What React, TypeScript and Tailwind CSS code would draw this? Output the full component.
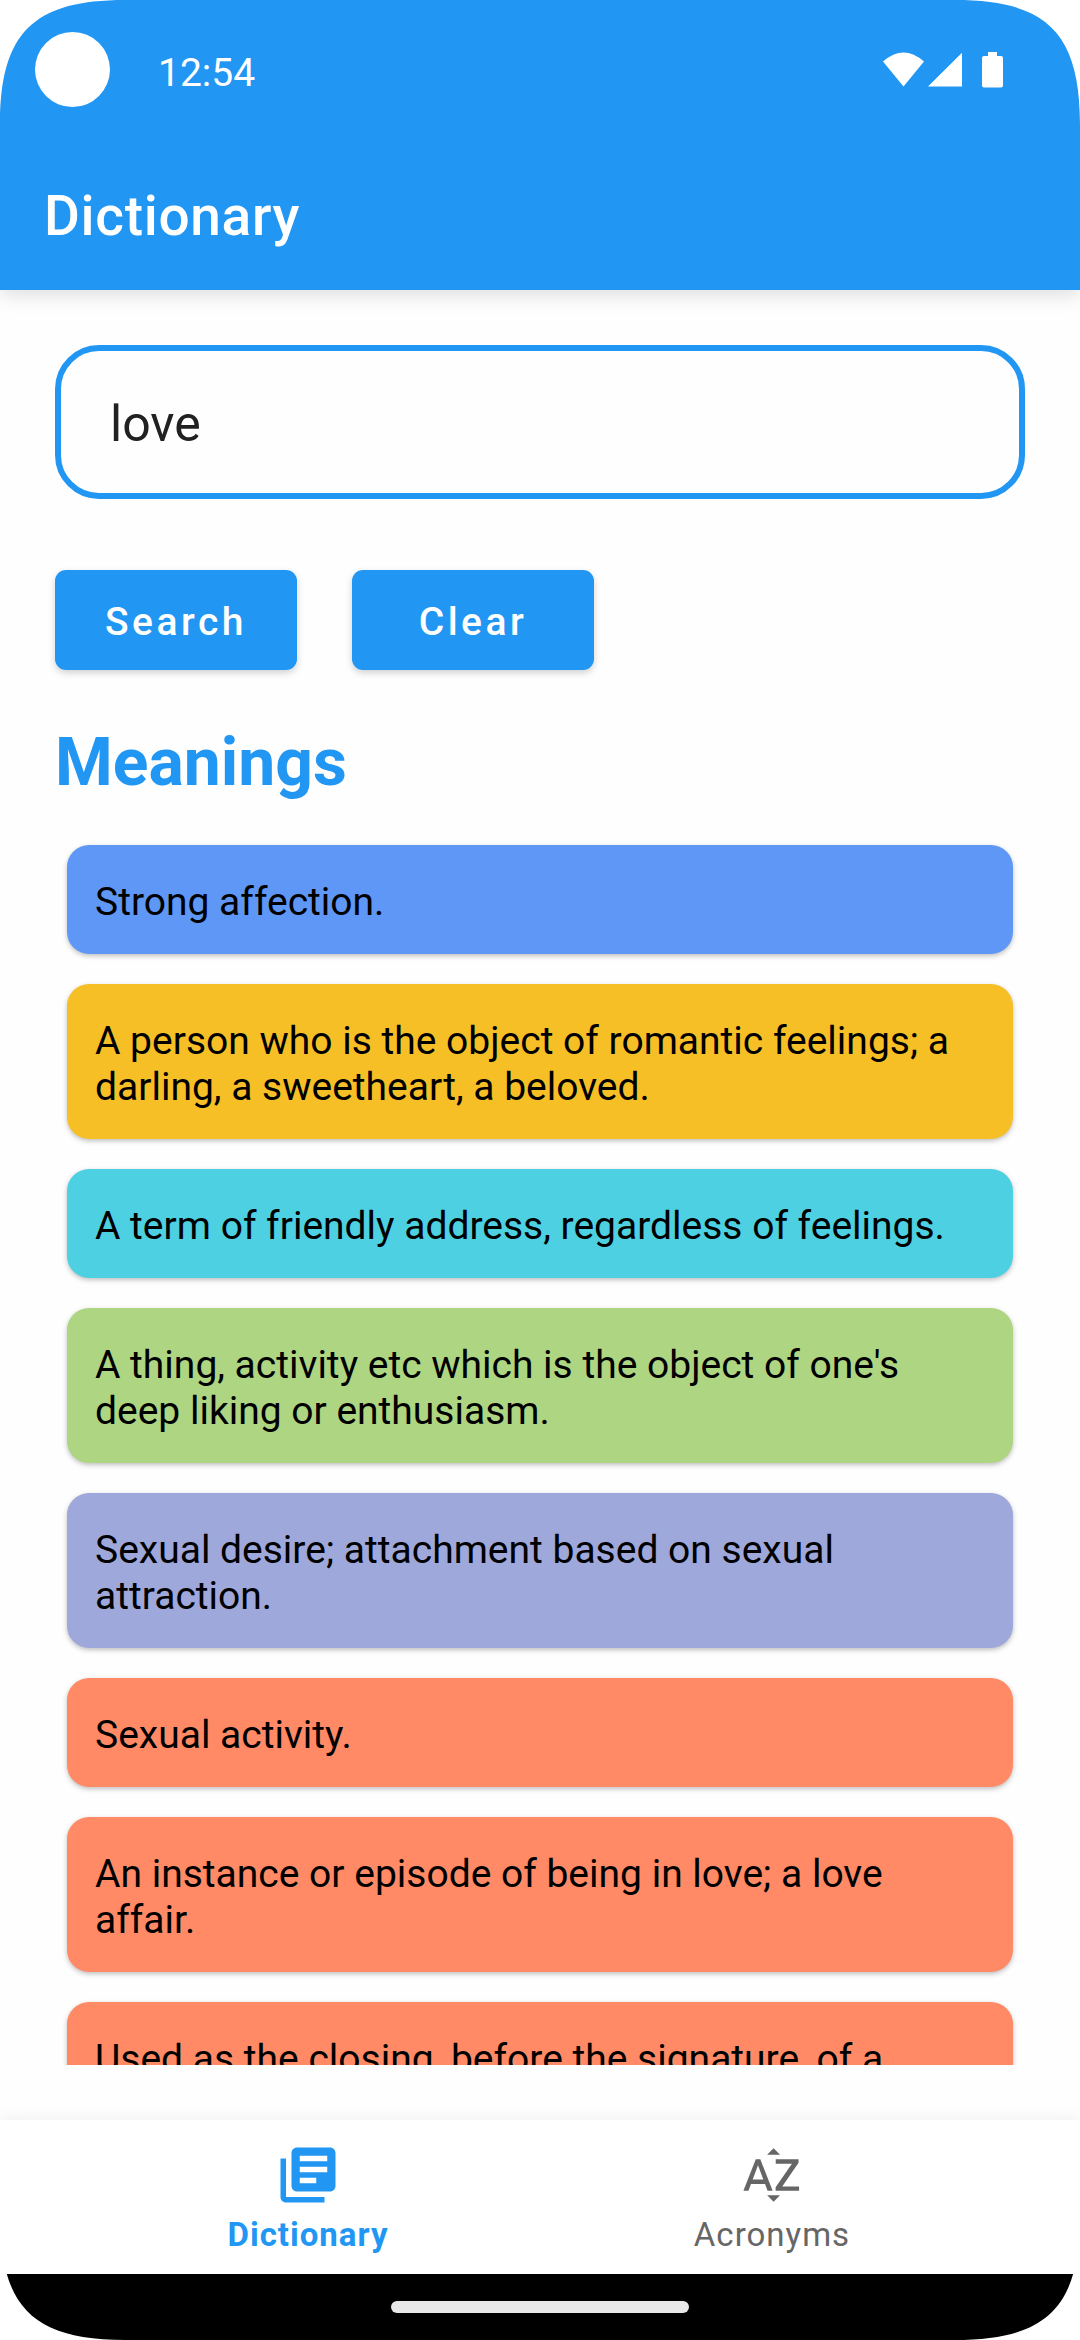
import { useState } from "react";
import { MdLibraryBooks, MdSortByAlpha } from "react-icons/md";

const meanings = [
  { text: "Strong affection.", color: "bg-[#5e97f6]" },
  {
    text: "A person who is the object of romantic feelings; a darling, a sweetheart, a beloved.",
    color: "bg-[#f6bf26]",
  },
  { text: "A term of friendly address, regardless of feelings.", color: "bg-[#4dd0e1]" },
  {
    text: "A thing, activity etc which is the object of one's deep liking or enthusiasm.",
    color: "bg-[#aed581]",
  },
  { text: "Sexual desire; attachment based on sexual attraction.", color: "bg-[#9fa8da]" },
  { text: "Sexual activity.", color: "bg-[#ff8a65]" },
  { text: "An instance or episode of being in love; a love affair.", color: "bg-[#ff8a65]" },
  { text: "Used as the closing, before the signature, of a letter.", color: "bg-[#ff8a65]" },
];

// Rounded display corner, drawn for the top left and turned for the others.
function Corner({ className }: { className: string }) {
  return (
    <svg
      aria-hidden="true"
      viewBox="0 0 125 125"
      className={`pointer-events-none absolute z-20 size-[125px] ${className}`}
    >
      <path d="M0 0H125C33 0 0 33 0 125Z" fill="#fff" />
    </svg>
  );
}

function StatusBar() {
  return (
    <div className="flex h-[136px] items-start px-[35px] pt-8">
      <div className="flex h-[75px] w-full items-center">
        <div className="size-[75px] rounded-full bg-white" />
        <span className="ml-12 pt-2 text-[39px] leading-[45px]">12:54</span>
        <svg
          aria-hidden="true"
          viewBox="0 0 120 36"
          className="mr-[42px] ml-auto h-9 w-[120px]"
          fill="#fff"
        >
          <path d="M0 9.500Q20.500 -8.500 41 9.500L20.500 34.500Z" />
          <path d="M79 .8V34.500H45Z" />
          <path d="M105 0h9v4h4a2 2 0 0 1 2 2v27.500a2 2 0 0 1-2 2h-17a2 2 0 0 1-2-2V6a2 2 0 0 1 2-2h4Z" />
        </svg>
      </div>
    </div>
  );
}

function ActionButton({ label, onClick }: { label: string; onClick?: () => void }) {
  return (
    <button
      type="button"
      onClick={onClick}
      className="h-[100px] w-[242px] rounded-[11px] bg-[#2196f3] pt-1 text-[39px] leading-[46px] font-medium tracking-[0.09em] text-white shadow-[0_3px_7px_rgba(0,0,0,0.18)]"
    >
      {label}
    </button>
  );
}

export default function App() {
  const [word, setWord] = useState("love");

  return (
    <div className="relative flex h-screen flex-col overflow-hidden bg-[#fefefe] font-[Roboto,sans-serif]">
      <header className="z-10 bg-[#2196f3] text-white shadow-[0_4px_20px_rgba(0,0,0,0.14)]">
        <StatusBar />
        <div className="flex h-[154px] items-center px-11 pt-1.5">
          <h1 className="text-[55px] leading-[64px] font-medium tracking-[0.0125em]">Dictionary</h1>
        </div>
      </header>

      <main className="flex min-h-0 flex-1 flex-col px-[55px] pt-[55px] pb-[55px]">
        <input
          type="text"
          aria-label="Word"
          value={word}
          onChange={(e) => setWord(e.target.value)}
          className="h-[154px] w-full shrink-0 rounded-[44px] border-[6px] border-[#2196f3] bg-transparent px-[49px] pt-1 text-[50px] text-[#212121] outline-none"
        />

        <div className="mt-[71px] flex gap-[55px]">
          <ActionButton label="Search" />
          <ActionButton label="Clear" onClick={() => setWord("")} />
        </div>

        <h2 className="mt-[54px] text-[66px] leading-[78px] font-bold text-[#2196f3]">Meanings</h2>

        <div className="mt-7 min-h-0 flex-1 overflow-x-hidden overflow-y-auto [scrollbar-width:none]">
          <ul className="flex flex-col gap-[30px] px-3 pt-[15px]">
            {meanings.map((m) => (
              <li
                key={m.text}
                className={`rounded-[22px] px-7 pt-[34px] pb-[29px] text-[39px] leading-[46px] text-black shadow-[0_2px_5px_rgba(0,0,0,0.25)] ${m.color}`}
              >
                {m.text}
              </li>
            ))}
          </ul>
        </div>
      </main>

      <nav className="z-10 flex h-[154px] justify-center bg-white text-[33px] leading-[38px] shadow-[0_0_16px_rgba(0,0,0,0.07)]">
        <a
          href="#dictionary"
          aria-current="page"
          className="flex w-[464px] flex-col items-center pt-[22px] font-bold tracking-[1px] text-[#2196f3]"
        >
          <MdLibraryBooks className="size-[66px]" aria-hidden="true" />
          <span className="mt-2">Dictionary</span>
        </a>
        <a
          href="#acronyms"
          className="flex w-[464px] flex-col items-center pt-[22px] tracking-[1px] text-[#666666]"
        >
          <MdSortByAlpha className="size-[66px]" aria-hidden="true" />
          <span className="mt-2">Acronyms</span>
        </a>
      </nav>

      <div className="z-10 flex h-[66px] items-center justify-center bg-black">
        <div className="h-3 w-[298px] rounded-full bg-[#e8e8e8]" />
      </div>

      <Corner className="top-0 left-0" />
      <Corner className="top-0 right-0 rotate-90" />
      <Corner className="right-0 bottom-0 rotate-180" />
      <Corner className="bottom-0 left-0 -rotate-90" />
    </div>
  );
}
